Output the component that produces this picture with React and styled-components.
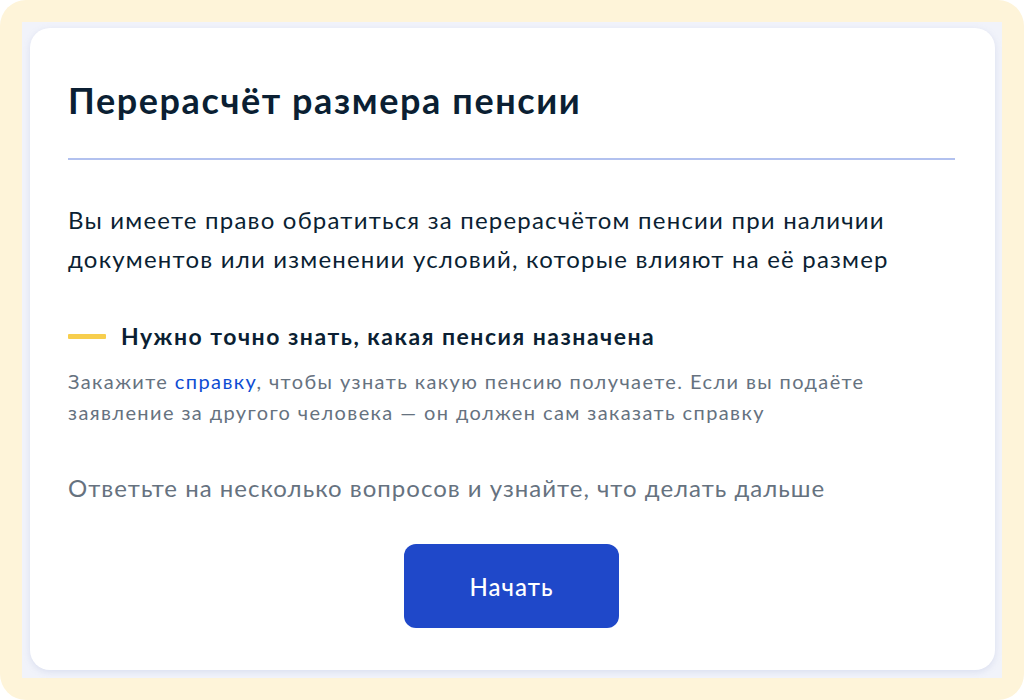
import React from 'react'
import styled, { createGlobalStyle } from 'styled-components'

const Global = createGlobalStyle`
  html, body {
    margin: 0;
    padding: 0;
    background: #ffffff;
  }
  body {
    font-family: Lato, "Noto Sans", sans-serif;
  }
`

const Frame = styled.div`
  width: 1024px;
  height: 700px;
  box-sizing: border-box;
  background: #fef4d9;
  border-radius: 26px;
  padding: 22px;
`

const Panel = styled.div`
  height: 100%;
  box-sizing: border-box;
  background: #f1f3fa;
  padding: 6px 7px 8px 8px;
`

const Card = styled.div`
  height: 100%;
  box-sizing: border-box;
  background: #ffffff;
  border-radius: 20px;
  box-shadow: 0 2px 6px rgba(150, 165, 210, 0.25);
  padding: 52px 40px 40px 38px;
  display: flex;
  flex-direction: column;
`

const Title = styled.h1`
  margin: 0;
  font-size: 36px;
  line-height: 40px;
  letter-spacing: 1.6px;
  font-weight: 700;
  color: #0b1f33;
`

const Divider = styled.hr`
  margin: 38px 0 0;
  border: 0;
  height: 2px;
  background: #b2c1ef;
`

const Lead = styled.p`
  margin: 40px 0 0;
  font-size: 24px;
  line-height: 39px;
  letter-spacing: 1.2px;
  color: #0b1f33;
  white-space: nowrap;
`

const NoteTitle = styled.div`
  margin-top: 44px;
  display: flex;
  align-items: center;
  gap: 15px;
  font-size: 23px;
  line-height: 28px;
  letter-spacing: 1.5px;
  font-weight: 700;
  color: #0b1f33;
`

const Dash = styled.span`
  flex: none;
  width: 38px;
  height: 5px;
  border-radius: 1px;
  background: #f7ce4d;
`

const NoteText = styled.p`
  margin: 16px 0 0;
  font-size: 20px;
  line-height: 31px;
  letter-spacing: 1.4px;
  color: #66727f;
  white-space: nowrap;
`

const Link = styled.a`
  color: #0d4cd3;
  text-decoration: none;
`

const Prompt = styled.p`
  margin: 45px 0 0;
  font-size: 24px;
  line-height: 30px;
  letter-spacing: 1px;
  color: #66727f;
`

const Button = styled.button`
  align-self: center;
  margin-top: 41px;
  width: 215px;
  height: 84px;
  border: 0;
  border-radius: 12px;
  background: #1f48c9;
  color: #ffffff;
  font-family: Lato, "Noto Sans", sans-serif;
  font-size: 24px;
  letter-spacing: 1px;
  font-weight: 500;
`

export default function App() {
  return (
    <>
      <Global />
      <Frame>
        <Panel>
          <Card>
            <Title>Перерасчёт размера пенсии</Title>
            <Divider />
            <Lead>
              Вы имеете право обратиться за перерасчётом пенсии при наличии
              <br />
              документов или изменении условий, которые влияют на её размер
            </Lead>
            <NoteTitle>
              <Dash />
              Нужно точно знать, какая пенсия назначена
            </NoteTitle>
            <NoteText>
              Закажите <Link href="#">справку</Link>, чтобы узнать какую пенсию получаете. Если вы подаёте
              <br />
              заявление за другого человека — он должен сам заказать справку
            </NoteText>
            <Prompt>Ответьте на несколько вопросов и узнайте, что делать дальше</Prompt>
            <Button>Начать</Button>
          </Card>
        </Panel>
      </Frame>
    </>
  )
}
